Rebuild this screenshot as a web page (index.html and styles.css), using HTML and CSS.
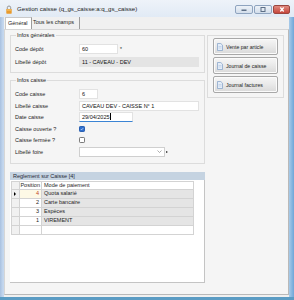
FILE: index.html
```html
<!DOCTYPE html>
<html lang="fr">
<head>
  <meta charset="UTF-8" />
  <title>Gestion caisse</title>
  <link rel="stylesheet" href="styles.css">
</head>
<body>
  <div class="window">
    <div class="titlebar">
      <svg class="lock" width="6" height="9" viewBox="0 0 6 9">
        <path d="M1.3 4.2V2.7a1.7 1.7 0 0 1 3.4 0v1.5" fill="none" stroke="#8c8c8c" stroke-width="0.9"/>
        <rect x="0.3" y="4" width="5.4" height="4.7" rx="0.6" fill="#e99a2c"/>
        <rect x="0.8" y="4.4" width="4.4" height="1.2" fill="#f6c46a"/>
      </svg>
      <span class="title">Gestion caisse (q_gs_caisse:a:q_gs_caisse)</span>
      <div class="caption-btns">
        <span class="cbtn">
          <svg width="8" height="5" viewBox="0 0 8 5"><rect x="1.5" y="2.5" width="5" height="1.5" fill="#5d6f86"/></svg>
        </span>
        <span class="cbtn">
          <svg width="8" height="5" viewBox="0 0 8 5"><rect x="2" y="0.5" width="4" height="4" fill="none" stroke="#5d6f86" stroke-width="1"/></svg>
        </span>
        <span class="cbtn close">
          <svg width="8" height="5" viewBox="0 0 8 5"><path d="M2.3 0.5l3.4 4M5.7 0.5l-3.4 4" stroke="#fff" stroke-width="1.3"/></svg>
        </span>
      </div>
    </div>

    <div class="client">
      <div class="tabs">
        <span class="tab active">Général</span>
        <span class="tab">Tous les champs</span>
      </div>

      <div class="page">
        <div class="col-left">
          <fieldset class="group general">
            <legend>Infos générales</legend>
            <div class="row"><label>Code dépôt</label><span class="input w-depot">60</span><span class="req">*</span></div>
            <div class="row"><label>Libellé dépôt</label><span class="input readonly w-long">11 - CAVEAU - DEV</span></div>
          </fieldset>

          <fieldset class="group caisse">
            <legend>Infos caisse</legend>
            <div class="row"><label>Code caisse</label><span class="input w-code">6</span></div>
            <div class="row"><label>Libellé caisse</label><span class="input w-long">CAVEAU DEV - CAISSE N° 1</span></div>
            <div class="row"><label>Date caisse</label><span class="input focused w-date">29/04/2025<i class="caret"></i></span></div>
            <div class="row"><label>Caisse ouverte ?</label>
              <span class="check on">
                <svg width="6" height="6" viewBox="0 0 6 6"><path d="M1.2 3.1l1.2 1.2 2.4-2.6" fill="none" stroke="#fff" stroke-width="0.9"/></svg>
              </span>
            </div>
            <div class="row"><label>Caisse fermée ?</label><span class="check"></span></div>
            <div class="row"><label>Libellé foire</label>
              <span class="input combo w-combo">
                <svg width="5" height="3" viewBox="0 0 5 3"><path d="M0.5 0.5l2 2 2-2" fill="none" stroke="#777" stroke-width="0.6"/></svg>
              </span>
              <span class="combo-arrow"></span>
            </div>
          </fieldset>

          <div class="grid-panel">
            <div class="grid-caption">Reglement sur Caisse [4]</div>
            <div class="grid-body">
              <table class="grid">
                <colgroup><col class="c-ind"><col class="c-pos"><col class="c-mode"></colgroup>
                <tr class="head"><td class="ind"></td><td class="pos">Position</td><td>Mode de paiement</td></tr>
                <tr class="current"><td class="ind"><span class="arrow"></span></td><td class="pos">4</td><td class="mode">Quota salarié</td></tr>
                <tr><td class="ind"></td><td class="pos">2</td><td class="mode">Carte bancaire</td></tr>
                <tr><td class="ind"></td><td class="pos">3</td><td class="mode">Espèces</td></tr>
                <tr><td class="ind"></td><td class="pos">1</td><td class="mode">VIREMENT</td></tr>
                <tr class="new"><td class="ind"></td><td class="pos"></td><td></td></tr>
              </table>
            </div>
          </div>
        </div>

        <div class="col-right">
          <div class="actions">
            <button class="action"><svg class="doc" width="6" height="8" viewBox="0 0 6 8"><path d="M0.5 0.5h3.3l1.7 1.7v5.3h-5z" fill="#e4edf8" stroke="#7f9dc6" stroke-width="0.7"/><path d="M1.5 3.5h3M1.5 5h3" stroke="#a9bfdc" stroke-width="0.5"/></svg>Vente par article</button>
            <button class="action"><svg class="doc" width="6" height="8" viewBox="0 0 6 8"><path d="M0.5 0.5h3.3l1.7 1.7v5.3h-5z" fill="#e4edf8" stroke="#7f9dc6" stroke-width="0.7"/><path d="M1.5 3.5h3M1.5 5h3" stroke="#a9bfdc" stroke-width="0.5"/></svg>Journal de caisse</button>
            <button class="action"><svg class="doc" width="6" height="8" viewBox="0 0 6 8"><path d="M0.5 0.5h3.3l1.7 1.7v5.3h-5z" fill="#e4edf8" stroke="#7f9dc6" stroke-width="0.7"/><path d="M1.5 3.5h3M1.5 5h3" stroke="#a9bfdc" stroke-width="0.5"/></svg>Journal factures</button>
          </div>
        </div>
      </div>
    </div>
  </div>
</body>
</html>
```

FILE: styles.css
```css
* {
  box-sizing: border-box;
}

body {
  margin: 0;
  font-family: "Liberation Sans", Arial, sans-serif;
  font-size: 5.5px;
  color: #1e1e1e;
  background: #fff;
}

.window {
  width: 294px;
  height: 300px;
  display: flex;
  flex-direction: column;
  background: linear-gradient(to right, #a9c1e0 0, #c4d7ee 3px, #dbe6f3 50%, #a9cbe9 289px, #6fa6d8 294px);
  border-bottom: 3px solid #5b9cc4;
}

/* title bar */

.titlebar {
  height: 17px;
  display: flex;
  align-items: center;
  padding-left: 6px;
  background: linear-gradient(#eef3f9, #e1eaf5);
}

.lock {
  margin-right: 5px;
  margin-top: 1px;
}

.title {
  font-size: 6.1px;
  color: #1b1b1b;
  flex: 1;
}

.caption-btns {
  display: flex;
  gap: 1px;
  margin-right: 4px;
  margin-top: 2px;
}

.cbtn {
  width: 18px;
  height: 9px;
  display: flex;
  align-items: center;
  justify-content: center;
  border: 1px solid #8fa4bf;
  border-radius: 2px;
  background: linear-gradient(#edf2f8, #d3deeb);
}

.cbtn.close {
  width: 17px;
  border-color: #9a4640;
  background: linear-gradient(#e08a80, #c6463b);
}

/* client area */

.client {
  flex: 1;
  margin: 0 5px 0 4px;
  background: #f0f0f0;
  display: flex;
  flex-direction: column;
}

.tabs {
  height: 12px;
  display: flex;
  align-items: flex-end;
  padding-left: 1px;
}

.tab {
  height: 12px;
  line-height: 11px;
  padding: 0 2px;
  border-right: 1px solid #9c9c9c;
}

.tab.active {
  width: 27px;
  background: #fff;
  border: 1px solid #c9c9c9;
  border-bottom: none;
  border-right: 1px solid #9c9c9c;
}

.tab + .tab {
  padding-left: 1px;
  width: 48px;
}

.page {
  height: 266px;
  display: flex;
  padding: 2px 0 0 5px;
  background: #f5f5f5;
  border: 1px solid #d6d6d6;
  border-right-color: #b9b9b9;
  border-bottom-color: #b9b9b9;
}

.col-left {
  width: 195px;
  display: flex;
  flex-direction: column;
}

.col-right {
  width: 77px;
  margin-left: 2px;
  padding-top: 3px;
}

/* group boxes */

.group {
  margin: 0;
  min-width: 0;
  border: 1px solid #dcdcdc;
  padding: 5px 0 5px 4px;
  display: flex;
  flex-direction: column;
}

.group legend {
  padding: 0 1px;
  margin-left: 1px;
  line-height: 7px;
  color: #1e1e1e;
}

.general {
  gap: 3px;
}

.caisse {
  margin-top: 4px;
  gap: 1.6px;
  padding-bottom: 6px;
}

.row {
  height: 10px;
  display: flex;
  align-items: center;
}

.row label {
  width: 64px;
  flex: none;
}

.input {
  height: 10px;
  line-height: 9px;
  padding-left: 2px;
  background: #fff;
  border: 1px solid #e2e2e2;
  white-space: nowrap;
  color: #111;
}

.input.readonly {
  background: #e4e4e4;
  border-color: #e4e4e4;
}

.input.focused {
  border-bottom: 1px solid #3b84d4;
}

.caret {
  display: inline-block;
  width: 1px;
  height: 7px;
  background: #000;
  vertical-align: -1px;
}

.w-depot { width: 39px; }
.w-code { width: 19px; }
.w-long { width: 120px; }
.w-date { width: 54px; }
.w-combo { width: 86px; }

.req {
  margin-left: 2px;
  font-size: 5px;
}

.check {
  width: 6px;
  height: 6px;
  border: 0.8px solid #7a7a7a;
  border-radius: 1.2px;
  background: #fff;
  display: flex;
  align-items: center;
  justify-content: center;
}

.check.on {
  background: #2f6fcf;
  border-color: #2a5fb0;
}

.combo {
  display: flex;
  align-items: center;
  justify-content: flex-end;
  padding-right: 2px;
  border-color: #cfcfcf;
}

.combo-arrow {
  margin-left: 1px;
  width: 0;
  height: 0;
  border-top: 1.5px solid transparent;
  border-bottom: 1.5px solid transparent;
  border-left: 2px solid #222;
}

/* right action buttons */

.actions {
  border: 1px solid #dcdcdc;
  padding: 2px 4px 4px 5px;
  display: flex;
  flex-direction: column;
  gap: 2px;
}

.action {
  width: 65px;
  height: 17px;
  display: flex;
  align-items: center;
  gap: 3px;
  padding: 0 0 0 3px;
  font-family: inherit;
  font-size: 5.2px;
  color: #1e1e1e;
  border: 1px solid #a8a8a8;
  border-radius: 2px;
  background: linear-gradient(#f6f6f6, #e9e9e9 50%, #d9d9d9);
  box-shadow: inset 0 0 0 1px #fbfbfb;
}

/* grid */

.grid-panel {
  margin-top: 8px;
  height: 111px;
  display: flex;
  flex-direction: column;
}

.grid-caption {
  height: 8px;
  line-height: 8px;
  padding-left: 3px;
  background: #c5d3e1;
  color: #1e2a36;
}

.grid-body {
  flex: 1;
  background: #fff;
  padding: 1px 0 0 1px;
  border-right: 1px solid #c4c4c4;
  border-bottom: 1px solid #c4c4c4;
}

.grid {
  width: 183px;
  border-collapse: collapse;
  table-layout: fixed;
}

.c-ind { width: 8px; }
.c-pos { width: 22px; }

.grid td {
  height: 9px;
  padding: 0 0 0 2px;
  border: 1px solid #d3d3d3;
  line-height: 7px;
  white-space: nowrap;
  overflow: hidden;
}

.grid .head td {
  height: 8px;
}

.grid td.pos {
  text-align: right;
  padding: 0 2px 0 0;
}

.grid .head td.pos {
  padding-right: 1px;
}

.grid td.ind {
  background: #f1f1f1;
  padding: 0;
}

.grid td.mode {
  background: #e5e5e5;
}

.grid .current td.pos {
  background: #fdf9e6;
  color: #c0461e;
}

.arrow {
  display: block;
  margin-left: 2px;
  width: 0;
  height: 0;
  border-top: 2px solid transparent;
  border-bottom: 2px solid transparent;
  border-left: 2.5px solid #000;
}
```
